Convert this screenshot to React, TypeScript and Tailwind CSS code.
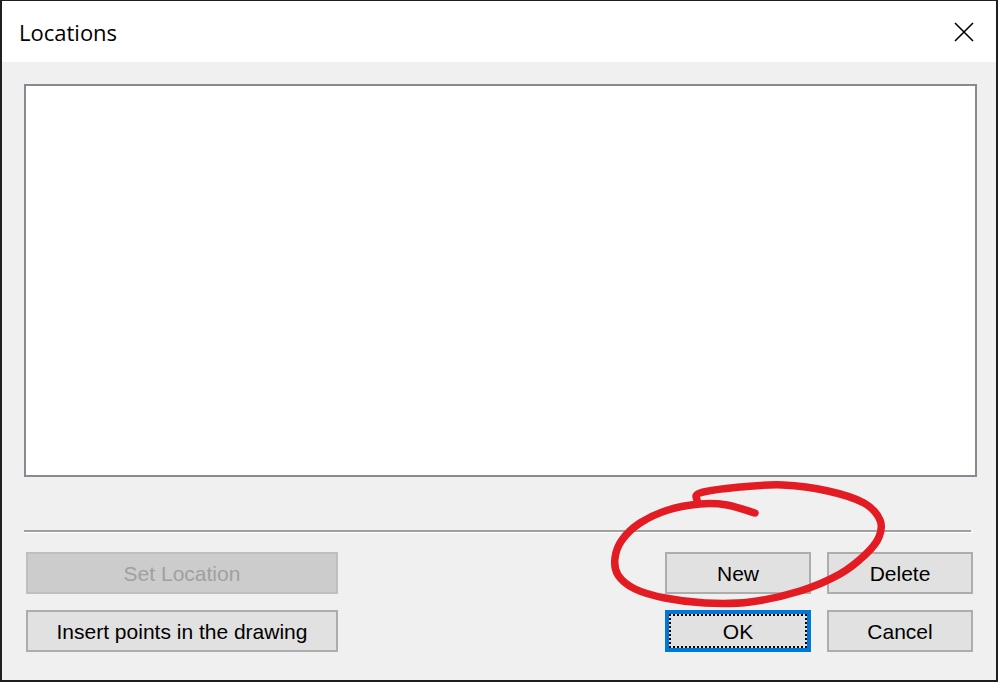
import React from "react";

const pts: [number, number][] = [
  [755, 513],
  [727, 505],
  [700, 504],
  [668, 510],
  [640, 523],
  [622, 540],
  [615, 558],
  [618, 575],
  [635, 589],
  [665, 598],
  [705, 603],
  [750, 602],
  [800, 591],
  [840, 574],
  [866, 554],
  [879, 537],
  [880, 520],
  [864, 503],
  [828, 491],
  [783, 485],
  [740, 487],
  [700, 493],
  [697, 500],
];

function catmull(p: [number, number][]): string {
  let d = `M ${p[0][0]} ${p[0][1]}`;
  for (let i = 0; i < p.length - 1; i++) {
    const p0 = p[Math.max(0, i - 1)];
    const p1 = p[i];
    const p2 = p[i + 1];
    const p3 = p[Math.min(p.length - 1, i + 2)];
    const c1x = p1[0] + (p2[0] - p0[0]) / 6;
    const c1y = p1[1] + (p2[1] - p0[1]) / 6;
    const c2x = p2[0] - (p3[0] - p1[0]) / 6;
    const c2y = p2[1] - (p3[1] - p1[1]) / 6;
    d += ` C ${c1x.toFixed(1)} ${c1y.toFixed(1)} ${c2x.toFixed(1)} ${c2y.toFixed(1)} ${p2[0]} ${p2[1]}`;
  }
  return d;
}

const btnFont = { fontFamily: '"Liberation Sans", Arial, sans-serif' };

function Btn({
  label,
  w,
  disabled,
  focused,
}: {
  label: string;
  w: string;
  disabled?: boolean;
  focused?: boolean;
}) {
  if (focused) {
    return (
      <div
        className={`${w} h-[42px] border-[4px] border-[#0078d7] bg-[#e1e1e1] flex`}
        style={btnFont}
      >
        <div className="flex-1 border-2 border-dotted border-black flex items-center justify-center text-[21px] text-black leading-none">
          {label}
        </div>
      </div>
    );
  }
  return (
    <div
      className={`${w} h-[42px] border-2 flex items-center justify-center text-[21px] leading-none ${
        disabled
          ? "bg-[#cccccc] border-[#bfbfbf] text-[#a0a0a0]"
          : "bg-[#e1e1e1] border-[#adadad] text-black"
      }`}
      style={btnFont}
    >
      {label}
    </div>
  );
}

export default function App() {
  return (
    <div className="relative w-[998px] h-[682px] overflow-hidden">
      <div className="w-[998px] h-[682px] border-l-2 border-r-2 border-t border-b-2 border-[#1f1f1f] flex flex-col">
        <div className="h-[61px] bg-white flex items-center pl-[17px] pr-[22px] shrink-0">
          <span
            className="text-[22px] text-black leading-none"
            style={{ fontFamily: '"Open Sans", "Noto Sans", sans-serif' }}
          >
            Locations
          </span>
          <svg
            className="ml-auto"
            width="20"
            height="20"
            viewBox="0 0 20 20"
          >
            <path
              d="M1 1 L19 19 M19 1 L1 19"
              stroke="#000"
              strokeWidth="1.6"
              fill="none"
            />
          </svg>
        </div>
        <div className="flex-1 bg-[#f0f0f0] pt-[22px] pl-[22px] pr-[19px] flex flex-col">
          <div className="h-[393px] border-2 border-[#878a92] bg-white" />
          <div className="mt-[53px] w-[949px]">
            <div className="h-[2px] w-[947px] bg-[#a0a0a0]" />
            <div className="h-[1px] w-[949px] bg-white" />
          </div>
          <div className="mt-[19px] flex flex-col gap-4 pr-[4px]">
            <div className="flex">
              <div className="ml-[2px]">
                <Btn label="Set Location" w="w-[312px]" disabled />
              </div>
              <div className="ml-auto flex gap-4">
                <Btn label="New" w="w-[146px]" />
                <Btn label="Delete" w="w-[146px]" />
              </div>
            </div>
            <div className="flex">
              <div className="ml-[2px]">
                <Btn label="Insert points in the drawing" w="w-[312px]" />
              </div>
              <div className="ml-auto flex gap-4">
                <Btn label="OK" w="w-[146px]" focused />
                <Btn label="Cancel" w="w-[146px]" />
              </div>
            </div>
          </div>
        </div>
      </div>
      <svg
        className="absolute left-0 top-0 pointer-events-none"
        width="998"
        height="682"
        viewBox="0 0 998 682"
      >
        <path
          d={catmull(pts)}
          stroke="#e31c23"
          strokeWidth="7.5"
          strokeLinecap="round"
          strokeLinejoin="round"
          fill="none"
        />
      </svg>
    </div>
  );
}
